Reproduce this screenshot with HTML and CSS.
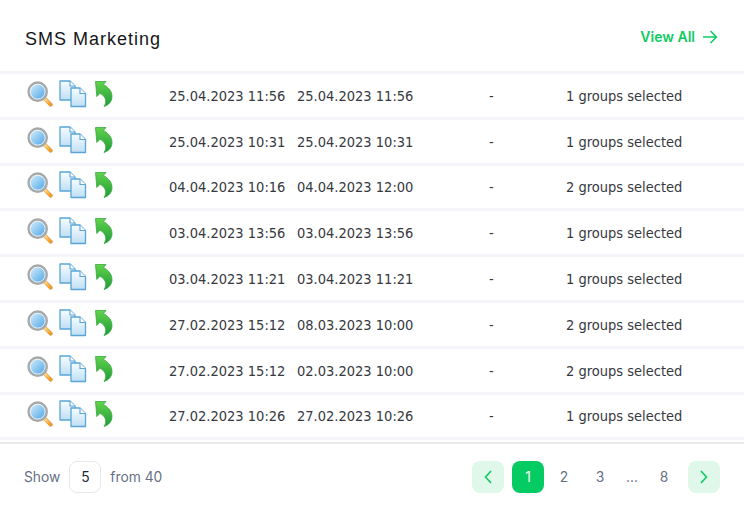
FILE: index.html
```html
<!DOCTYPE html>
<html lang="en">
<head>
<meta charset="utf-8">
<title>SMS Marketing</title>
<link rel="stylesheet" href="styles.css">
</head>
<body>
<svg class="defs" width="0" height="0" aria-hidden="true">
  <defs>
    <linearGradient id="lens" x1="0" y1="0" x2="1" y2="1"><stop offset="0" stop-color="#e2f5fe"/><stop offset="1" stop-color="#3f9fe4"/></linearGradient>
    <linearGradient id="handle" x1="0" y1="0" x2="1" y2="1"><stop offset="0" stop-color="#ffd98a"/><stop offset="1" stop-color="#f59a1c"/></linearGradient>
    <linearGradient id="sheet" x1="0" y1="0" x2="0" y2="1"><stop offset="0" stop-color="#f7fcff"/><stop offset="1" stop-color="#bfdff3"/></linearGradient>
    <linearGradient id="arrow" x1="0" y1="0" x2="0" y2="1"><stop offset="0" stop-color="#62d34c"/><stop offset="1" stop-color="#1f9a38"/></linearGradient>
    <symbol id="i-search" viewBox="0 0 28 28">
      <path d="M18.500 18.500l7 7" stroke="#c9974f" stroke-width="4.200" stroke-linecap="round"/>
      <path d="M19.500 19.500l5.800 5.800" stroke="url(#handle)" stroke-width="3.200" stroke-linecap="round"/>
      <circle cx="11.500" cy="11.500" r="9.800" fill="url(#lens)" stroke="#a8a8a8" stroke-width="2.600"/>
      <circle cx="11.500" cy="11.500" r="8" fill="none" stroke="#f4f4f4" stroke-width="1"/>
    </symbol>
    <symbol id="i-copy" viewBox="0 0 28 28">
      <path d="M1 1h10l5 5v14H1z" fill="url(#sheet)" stroke="#5aa5d6" stroke-width="1.300" stroke-linejoin="round"/>
      <path d="M11 1v5h5" fill="#fff" stroke="#5aa5d6" stroke-width="1.100"/>
      <path d="M12 8h9l5.500 5.500V26.500H12z" fill="url(#sheet)" stroke="#5aa5d6" stroke-width="1.300" stroke-linejoin="round"/>
      <path d="M21 8v5.500h5.500" fill="#fff" stroke="#5aa5d6" stroke-width="1.100"/>
    </symbol>
    <symbol id="i-back" viewBox="0 0 20 28">
      <path d="M1.500 1.500l10.500 0-2.600 3c4.600 2.500 8.600 6.300 8.600 12 0 4.800-3 8.500-8 10 1.800-2.800 2.200-5.400 1.200-8-.9-2.200-2.700-3.800-5.200-5.200l-3.200 3.200z" fill="url(#arrow)" stroke="#38a843" stroke-width=".8" stroke-linejoin="round"/>
    </symbol>
  </defs>
</svg>
<main class="card">
  <header class="head">
    <h1 class="title">SMS Marketing</h1>
    <a class="view-all" href="#">View All
      <svg class="view-arrow" viewBox="0 0 16 14" width="16" height="14"><path d="M1 7h13.500M8.500 1l6 6-6 6" fill="none" stroke="currentColor" stroke-width="1.500"/></svg>
    </a>
  </header>
  <div class="rows">
    <div class="row"><div class="icons"><svg class="ic-s"><use href="#i-search"/></svg><svg class="ic-c"><use href="#i-copy"/></svg><svg class="ic-b"><use href="#i-back"/></svg></div><span class="d1">25.04.2023 11:56</span><span class="d2">25.04.2023 11:56</span><span class="dash">-</span><span class="grp">1 groups selected</span></div>
    <div class="row"><div class="icons"><svg class="ic-s"><use href="#i-search"/></svg><svg class="ic-c"><use href="#i-copy"/></svg><svg class="ic-b"><use href="#i-back"/></svg></div><span class="d1">25.04.2023 10:31</span><span class="d2">25.04.2023 10:31</span><span class="dash">-</span><span class="grp">1 groups selected</span></div>
    <div class="row"><div class="icons"><svg class="ic-s"><use href="#i-search"/></svg><svg class="ic-c"><use href="#i-copy"/></svg><svg class="ic-b"><use href="#i-back"/></svg></div><span class="d1">04.04.2023 10:16</span><span class="d2">04.04.2023 12:00</span><span class="dash">-</span><span class="grp">2 groups selected</span></div>
    <div class="row"><div class="icons"><svg class="ic-s"><use href="#i-search"/></svg><svg class="ic-c"><use href="#i-copy"/></svg><svg class="ic-b"><use href="#i-back"/></svg></div><span class="d1">03.04.2023 13:56</span><span class="d2">03.04.2023 13:56</span><span class="dash">-</span><span class="grp">1 groups selected</span></div>
    <div class="row"><div class="icons"><svg class="ic-s"><use href="#i-search"/></svg><svg class="ic-c"><use href="#i-copy"/></svg><svg class="ic-b"><use href="#i-back"/></svg></div><span class="d1">03.04.2023 11:21</span><span class="d2">03.04.2023 11:21</span><span class="dash">-</span><span class="grp">1 groups selected</span></div>
    <div class="row"><div class="icons"><svg class="ic-s"><use href="#i-search"/></svg><svg class="ic-c"><use href="#i-copy"/></svg><svg class="ic-b"><use href="#i-back"/></svg></div><span class="d1">27.02.2023 15:12</span><span class="d2">08.03.2023 10:00</span><span class="dash">-</span><span class="grp">2 groups selected</span></div>
    <div class="row"><div class="icons"><svg class="ic-s"><use href="#i-search"/></svg><svg class="ic-c"><use href="#i-copy"/></svg><svg class="ic-b"><use href="#i-back"/></svg></div><span class="d1">27.02.2023 15:12</span><span class="d2">02.03.2023 10:00</span><span class="dash">-</span><span class="grp">2 groups selected</span></div>
    <div class="row"><div class="icons"><svg class="ic-s"><use href="#i-search"/></svg><svg class="ic-c"><use href="#i-copy"/></svg><svg class="ic-b"><use href="#i-back"/></svg></div><span class="d1">27.02.2023 10:26</span><span class="d2">27.02.2023 10:26</span><span class="dash">-</span><span class="grp">1 groups selected</span></div>
  </div>
  <footer class="foot">
    <div class="show"><span>Show</span><span class="size">5</span><span>from 40</span></div>
    <nav class="pager">
      <a class="nav" href="#"><svg viewBox="0 0 8 14" width="8" height="14"><path d="M7 1L1.500 7 7 13" fill="none" stroke="currentColor" stroke-width="1.600"/></svg></a>
      <a class="page current" href="#">1</a>
      <a class="page" href="#">2</a>
      <a class="page" href="#">3</a>
      <span class="page gap">...</span>
      <a class="page" href="#">8</a>
      <a class="nav" href="#"><svg viewBox="0 0 8 14" width="8" height="14"><path d="M1 1l5.500 6L1 13" fill="none" stroke="currentColor" stroke-width="1.600"/></svg></a>
    </nav>
  </footer>
</main>
</body>
</html>
```
FILE: styles.css
```css
* { box-sizing: border-box; }
html, body { margin: 0; height: 100%; background: #fff; }
body { width: 744px; height: 511px; overflow: hidden; }
.defs { position: absolute; }
.card { display: flex; flex-direction: column; height: 511px; }
.head { height: 71px; display: flex; align-items: center; justify-content: space-between; padding: 6px 26px 0 25px; }
.title { margin: 0; font: 400 18px/24px "Liberation Sans", Arial, sans-serif; letter-spacing: 1px; color: #15161a; }
.view-all { display: flex; align-items: center; gap: 7px; margin-top: -3px; font: 600 14px/20px Inter, sans-serif; color: #0ccb62; text-decoration: none; }
.rows { display: flex; flex-direction: column; border-bottom: 3px solid #f4f6f9; }
.row { height: 45.8px; display: flex; align-items: center; padding-top: 1px; border-top: 3px solid #f4f6f9; font: 14.5px/20px "DejaVu Sans Condensed", "DejaVu Sans", sans-serif; font-stretch: condensed; color: #36393e; }
.icons { width: 169px; padding-left: 27px; margin-bottom: 4px; display: flex; align-items: center; }
.ic-s { width: 26px; height: 26px; }
.ic-c { width: 28px; height: 28px; margin-left: 6px; }
.ic-b { width: 20px; height: 28px; margin-left: 7px; }
.d1 { width: 128px; white-space: nowrap; }
.d2 { width: 192px; white-space: nowrap; }
.dash { width: 77px; }
.grp { white-space: nowrap; }
.foot { flex: 1; margin-top: 2px; border-top: 2px solid #e9eaec; display: flex; align-items: center; justify-content: space-between; padding: 0 24px 2px 24px; font: 13.800px/20px Inter, sans-serif; color: #667085; }
.show { display: flex; align-items: center; gap: 9px; }
.size { width: 32px; height: 32px; border: 1px solid #e4e7ec; border-radius: 8px; display: flex; align-items: center; justify-content: center; color: #1d2433; }
.pager { display: flex; align-items: center; gap: 4px; }
.page, .nav { width: 32px; height: 32px; border-radius: 8px; display: flex; align-items: center; justify-content: center; text-decoration: none; color: #667085; }
.gap { width: 24px; }
.nav { background: #dff8ea; color: #0ccb62; }
.nav:first-child { margin-right: 4px; }
.nav:last-child { margin-left: 4px; }
.current { background: #05cc62; color: #fff; }
```
